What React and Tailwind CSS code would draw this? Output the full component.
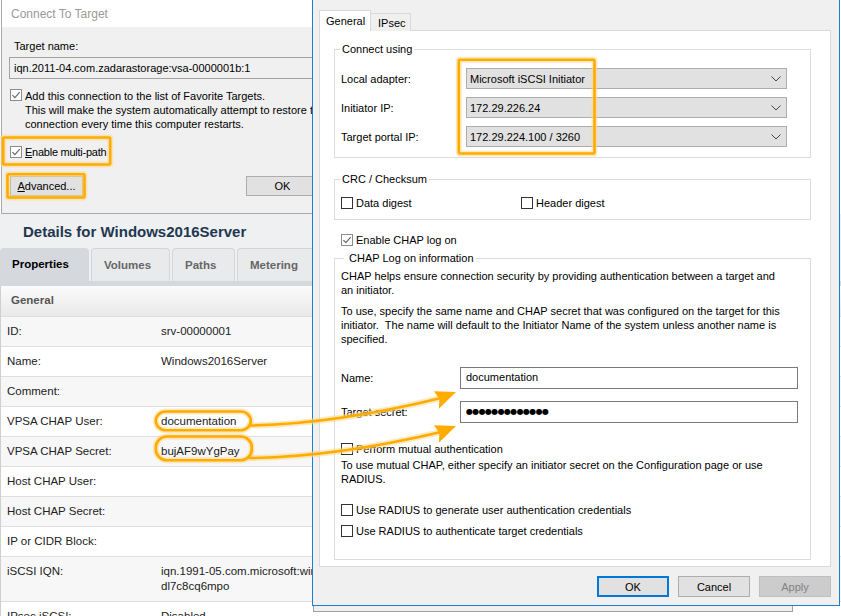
import React from "react";

const ROWS = [
  ["ID:", "srv-00000001"],
  ["Name:", "Windows2016Server"],
  ["Comment:", ""],
  ["VPSA CHAP User:", "documentation"],
  ["VPSA CHAP Secret:", "bujAF9wYgPay"],
  ["Host CHAP User:", ""],
  ["Host CHAP Secret:", ""],
  ["IP or CIDR Block:", ""],
  ["iSCSI IQN:", ["iqn.1991-05.com.microsoft:win-", "dl7c8cq6mpo"]],
  ["IPsec iSCSI:", "Disabled"],
];

const TABS = [
  { label: "Properties", width: 89, active: true },
  { label: "Volumes", width: 79 },
  { label: "Paths", width: 63 },
  { label: "Metering", width: 82 },
  { label: "Performance", width: 100 },
];

// hand-drawn highlight marks on top of everything
const MARKS = [
  { type: "rect", x: 3.2, y: 137.5, w: 107, h: 27, rx: 1 },
  { type: "rect", x: 7.5, y: 174.2, w: 77, h: 23.3, rx: 1 },
  { type: "rect", x: 458.8, y: 59.8, w: 135.7, h: 93.7, rx: 1 },
  { type: "rect", x: 155.8, y: 411.5, w: 95, h: 18.7, rx: 10 },
  { type: "rect", x: 155.8, y: 436.5, w: 96, h: 23.7, rx: 11 },
  { type: "path", d: "M250 425.5 Q335 424 441 398" },
  { type: "path", d: "M250 458 Q335 457 441 432" },
];

function Mark({ m }) {
  if (m.type === "rect") return <rect x={m.x} y={m.y} width={m.w} height={m.h} rx={m.rx} />;
  return <path d={m.d} />;
}

function Check({ checked, muted }) {
  return (
    <span
      className={`flex h-[12px] w-[12px] shrink-0 items-center justify-center border bg-white ${
        muted ? "border-[#8c8c8c]" : "border-[#333333]"
      }`}
    >
      {checked && (
        <svg width="10" height="10" viewBox="0 0 10 10">
          <path d="M1.4 5.1 L3.9 7.6 L8.7 2.1" fill="none" stroke={muted ? "#6a6a6a" : "#333"} strokeWidth="1.2" />
        </svg>
      )}
    </span>
  );
}

function CheckRow({ checked, muted, className = "", children }) {
  return (
    <div className={`flex h-[14px] items-center gap-[3px] ${className}`}>
      <Check checked={checked} muted={muted} />
      <span className="whitespace-nowrap">{children}</span>
    </div>
  );
}

function Combo({ value }) {
  return (
    <div className="flex h-[21px] w-[321px] items-center justify-between border border-[#adadad] bg-[#e1e1e1] pl-[3px] pr-[5px]">
      <span>{value}</span>
      <svg width="10" height="6" viewBox="0 0 10 6">
        <path d="M0.5 0.5 L5 5 L9.5 0.5" fill="none" stroke="#444" strokeWidth="1" />
      </svg>
    </div>
  );
}

function Group({ title, legendClass = "ml-[5px] px-[2px]", className = "", children }) {
  return (
    <fieldset className={`ml-[14px] w-[477px] border border-[#dcdcdc] ${className}`}>
      <legend className={`leading-[13px] ${legendClass}`}>{title}</legend>
      {children}
    </fieldset>
  );
}

function WinButton({ children, primary, disabled }) {
  return (
    <div
      className={`flex h-[21px] w-[72px] items-center justify-center ${
        primary
          ? "border-2 border-[#0078d7] bg-[#e1e1e1]"
          : disabled
          ? "border border-[#bfbfbf] bg-[#cccccc] text-[#838383]"
          : "border border-[#adadad] bg-[#e1e1e1]"
      }`}
    >
      {children}
    </div>
  );
}

function ServerPage() {
  return (
    <div className="flex w-[841px] flex-col font-['Liberation_Sans',Arial,sans-serif] text-[11.5px] text-[#222]">
      <div className="h-[214px] bg-white" />
      <div className="flex h-[34px] items-center bg-[#eef0f2] pl-[23px] pt-[3px] text-[15px] font-bold text-[#22374f]">
        Details for Windows2016Server
      </div>
      <div className="flex h-[33px] items-end gap-[2px] bg-[#eef0f2]">
        {TABS.map((t) => (
          <div
            key={t.label}
            style={{ width: t.width }}
            className={`flex h-[33px] items-center rounded-t-[4px] pl-[12px] pt-[1px] font-bold ${
              t.active ? "bg-[#d5d9dd] text-black" : "border border-b-0 border-[#d3d6d9] bg-[#e9eaec] text-[#666]"
            }`}
          >
            {t.label}
          </div>
        ))}
      </div>
      <div className="h-[5px] bg-[#d5d9dd]" />
      <div className="border-l border-[#cfcfcf]">
        <div className="flex h-[31px] items-center border-b border-[#dedede] bg-gradient-to-b from-[#fbfbfb] to-[#e9e9e9] pl-[10px] font-bold text-[#555]">
          General
        </div>
        {ROWS.map(([label, value], i) => (
          <div
            key={label}
            className={`flex border-b border-[#dedede] py-[7px] leading-[15px] ${i % 2 === 0 ? "bg-[#f7f7f7]" : "bg-white"}`}
          >
            <div className="w-[160px] pl-[6px]">{label}</div>
            <div className="whitespace-nowrap">
              {Array.isArray(value) ? value.map((v) => <div key={v}>{v}</div>) : value}
            </div>
          </div>
        ))}
      </div>
    </div>
  );
}

function ConnectDialog() {
  return (
    <div className="absolute left-[1px] top-0 h-[214px] w-[430px] border-b border-l border-[#a9a9a9] bg-[#f0f0f0] font-['Liberation_Sans',Arial,sans-serif] text-[11px] leading-[14px] text-black">
      <div className="flex h-[27px] items-center bg-white pl-[9px] text-[12px] text-[#9a9a9a]">Connect To Target</div>
      <div className="pl-[7px]">
        <div className="mt-[12px] pl-[5px]">Target name:</div>
        <div className="mt-[4px] flex h-[22px] w-[410px] items-center border border-[#a3a3a3] pl-[4px]">
          iqn.2011-04.com.zadarastorage:vsa-0000001b:1
        </div>
        <div className="mt-[10px] flex items-start gap-[3px] pl-[1px]">
          <Check checked muted />
          <div className="whitespace-nowrap">
            <div>Add this connection to the list of Favorite Targets.</div>
            <div>This will make the system automatically attempt to restore this</div>
            <div>connection every time this computer restarts.</div>
          </div>
        </div>
        <CheckRow checked muted className="mt-[14px] pl-[1px] tracking-[-0.25px]">
          <span className="underline">E</span>nable multi-path
        </CheckRow>
        <div className="mt-[17px] flex gap-[163px] pl-[1px]">
          <div className="flex h-[20px] w-[73px] items-center justify-center border border-[#adadad] bg-[#e1e1e1]">
            <span>
              <span className="underline">A</span>dvanced...
            </span>
          </div>
          <div className="flex h-[20px] w-[73px] items-center justify-center border border-[#adadad] bg-[#e1e1e1]">OK</div>
        </div>
      </div>
    </div>
  );
}

function AdvancedDialog() {
  return (
    <div className="absolute left-[312px] top-[-1px] h-[607px] w-[528px] border border-[#1a7fd4] bg-[#f0f0f0] font-['Liberation_Sans',Arial,sans-serif] text-[11px] leading-[14px] text-black">
      <div className="flex items-end pl-[6px] pt-[10px]">
        <div className="relative z-10 flex h-[21px] w-[52px] items-center border border-b-0 border-[#d9d9d9] bg-white pl-[6px]">
          General
        </div>
        <div className="flex h-[18px] w-[40px] items-center border border-b-0 border-l-0 border-[#d9d9d9] bg-[#f0f0f0] pl-[7px] pt-[1px]">
          IPsec
        </div>
      </div>
      <div className="ml-[6px] mt-[-1px] h-[537px] w-[512px] border border-[#d9d9d9] bg-white">
        <Group title="Connect using" className="mt-[12px]">
          <div className="flex flex-col gap-[8px] pb-[10px] pt-[12px]">
            {[
              ["Local adapter:", "Microsoft iSCSI Initiator"],
              ["Initiator IP:", "172.29.226.24"],
              ["Target portal IP:", "172.29.224.100 / 3260"],
            ].map(([label, value]) => (
              <div key={label} className="flex items-center">
                <div className="w-[131px] pl-[6px]">{label}</div>
                <Combo value={value} />
              </div>
            ))}
          </div>
        </Group>

        <Group title="CRC / Checksum" className="mt-[15px]">
          <div className="flex pb-[9px] pl-[6px] pt-[10px]">
            <CheckRow className="w-[180px]">Data digest</CheckRow>
            <CheckRow>Header digest</CheckRow>
          </div>
        </Group>

        <CheckRow checked muted className="ml-[21px] mt-[13px]">
          Enable CHAP log on
        </CheckRow>

        <Group title="CHAP Log on information" legendClass="ml-[9px] pl-[5px] pr-[2px]" className="mt-[5px]">
          <div className="px-[6px] pb-[21px] pt-[4px]">
            <div className="whitespace-nowrap">
              <div>CHAP helps ensure connection security by providing authentication between a target and</div>
              <div>an initiator.</div>
            </div>
            <div className="mt-[7px] whitespace-nowrap">
              <div>To use, specify the same name and CHAP secret that was configured on the target for this</div>
              <div>initiator.&nbsp; The name will default to the Initiator Name of the system unless another name is</div>
              <div>specified.</div>
            </div>

            <div className="mt-[21px] flex items-center">
              <div className="w-[119px]">Name:</div>
              <div className="flex h-[22px] w-[338px] items-center border border-[#7a7a7a] bg-white pb-[2px] pl-[5px]">
                documentation
              </div>
            </div>
            <div className="mt-[12px] flex items-center">
              <div className="w-[119px]">Target secret:</div>
              <div className="flex h-[22px] w-[338px] items-center border border-[#7a7a7a] bg-white pl-[5px] font-['DejaVu_Sans',sans-serif] text-[8px] tracking-[-0.65px]">
                ●●●●●●●●●●●●●
              </div>
            </div>

            <CheckRow className="mt-[19px]">Perform mutual authentication</CheckRow>
            <div className="mt-[3px] whitespace-nowrap leading-[13.5px]">
              <div>To use mutual CHAP, either specify an initiator secret on the Configuration page or use</div>
              <div>RADIUS.</div>
            </div>

            <CheckRow className="mt-[17px]">Use RADIUS to generate user authentication credentials</CheckRow>
            <CheckRow className="mt-[7px]">Use RADIUS to authenticate target credentials</CheckRow>
          </div>
        </Group>
      </div>
      <div className="ml-[284px] mt-[9px] flex gap-[9px]">
        <WinButton primary>OK</WinButton>
        <WinButton>Cancel</WinButton>
        <WinButton disabled>Apply</WinButton>
      </div>
    </div>
  );
}

export default function App() {
  return (
    <div className="relative h-[616px] w-[841px] overflow-hidden bg-white">
      <ServerPage />
      <ConnectDialog />
      {/* window stacked behind the settings dialog */}
      <div className="absolute left-[313px] top-0 h-[612px] w-[480px] border border-[#a0a0a0] bg-[#f0f0f0]" />
      <AdvancedDialog />

      <svg className="pointer-events-none absolute left-0 top-0" width="841" height="616" viewBox="0 0 841 616">
        <g fill="none" stroke="#ffd88a" strokeWidth="6" strokeOpacity="0.55" strokeLinecap="round">
          {MARKS.map((m, i) => (
            <Mark key={i} m={m} />
          ))}
        </g>
        <g fill="none" stroke="#ffab00" strokeWidth="2.6" strokeLinecap="round">
          {MARKS.map((m, i) => (
            <Mark key={i} m={m} />
          ))}
        </g>
        <g fill="#ffab00">
          <polygon points="456,392 434,391.3 439.4,399.2 438.9,408.7" />
          <polygon points="456,426 434,425.3 439.4,433.2 438.9,442.7" />
        </g>
      </svg>
    </div>
  );
}
